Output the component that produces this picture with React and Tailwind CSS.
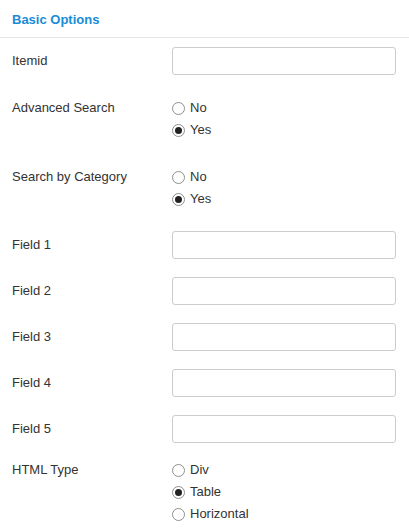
import React from "react";

const Radio = ({ label, checked }) => (
  <div className="flex items-center h-[22px]">
    <span className="w-[13px] h-[13px] rounded-full border border-[#8f8f8f] bg-white flex items-center justify-center">
      {checked ? <span className="w-[7px] h-[7px] rounded-full bg-[#222]" /> : null}
    </span>
    <span className="ml-[5px]">{label}</span>
  </div>
);

const InputRow = ({ label, className = "" }) => (
  <div className={`flex items-center ${className}`}>
    <div className="w-[160px]">{label}</div>
    <input
      type="text"
      className="w-[224px] h-[28px] border border-[#cccccc] rounded-[3px] bg-white outline-none"
    />
  </div>
);

const RadioRow = ({ label, options, selected, className = "" }) => (
  <div className={`flex ${className}`}>
    <div className="w-[160px] h-[22px] flex items-center">{label}</div>
    <div className="flex flex-col">
      {options.map((o) => (
        <Radio key={o} label={o} checked={o === selected} />
      ))}
    </div>
  </div>
);

export default function App() {
  return (
    <div
      className="w-[409px] h-[528px] bg-white text-[13px] text-[#333333] overflow-hidden"
      style={{ fontFamily: "'Liberation Sans', Arial, sans-serif" }}
    >
      {/* header */}
      <div className="h-[38px] pt-[3px] pl-[12px] flex items-center border-b border-[#e5e5e5]">
        <span className="font-bold text-[#1a8bd6]">Basic Options</span>
      </div>

      <div className="pl-[12px]">
        <InputRow label="Itemid" className="mt-[9px]" />
        <RadioRow
          label="Advanced Search"
          options={["No", "Yes"]}
          selected="Yes"
          className="mt-[22px]"
        />
        <RadioRow
          label="Search by Category"
          options={["No", "Yes"]}
          selected="Yes"
          className="mt-[25px]"
        />
        <InputRow label="Field 1" className="mt-[21px]" />
        <InputRow label="Field 2" className="mt-[18px]" />
        <InputRow label="Field 3" className="mt-[18px]" />
        <InputRow label="Field 4" className="mt-[18px]" />
        <InputRow label="Field 5" className="mt-[18px]" />
        <RadioRow
          label="HTML Type"
          options={["Div", "Table", "Horizontal"]}
          selected="Table"
          className="mt-[16px]"
        />
      </div>
    </div>
  );
}
